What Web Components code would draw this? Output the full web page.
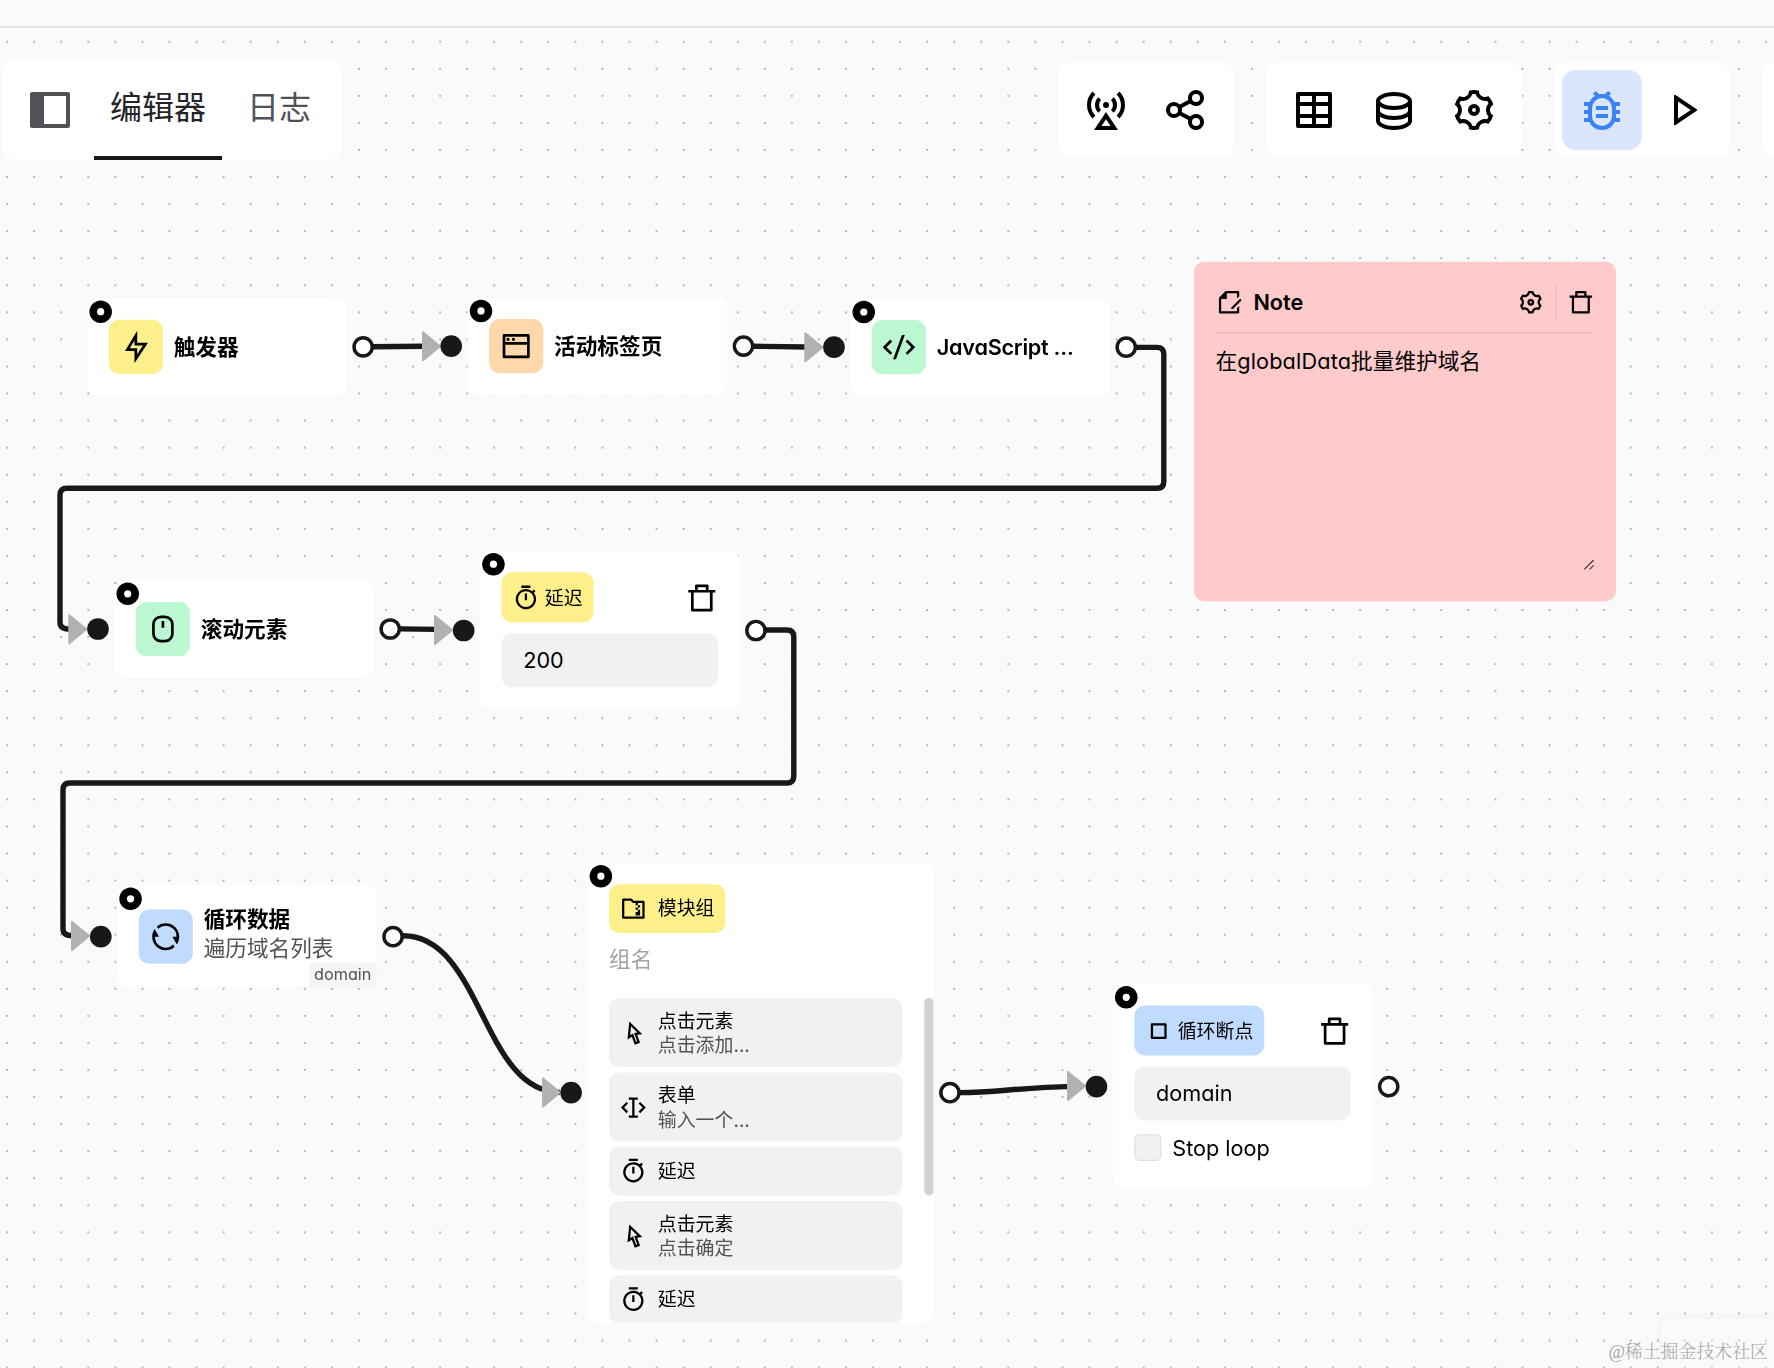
<!DOCTYPE html>
<html lang="zh-CN">
<head>
<meta charset="utf-8">
<title>Workflow editor</title>
<style>
  html, body { margin: 0; height: 100%; overflow: hidden; background: #fafafa; }
  body { font-family: Inter, "Noto Sans CJK SC", sans-serif; font-feature-settings: "cv11"; color: #000; }
</style>
</head>
<body>
<workflow-app>
  <app-toolbar slot="toolbar">
    <tool-group slot="start" class="tabs">
      <ui-icon name="sidebar" size="48"></ui-icon>
      <tab-label active>编辑器</tab-label>
      <tab-label>日志</tab-label>
    </tool-group>
    <tool-group slot="end">
      <tool-button><ui-icon name="station" size="48"></ui-icon></tool-button>
      <tool-button><ui-icon name="share" size="48"></ui-icon></tool-button>
    </tool-group>
    <tool-group slot="end">
      <tool-button><ui-icon name="table" size="48"></ui-icon></tool-button>
      <tool-button><ui-icon name="database" size="48"></ui-icon></tool-button>
      <tool-button><ui-icon name="settings" size="48"></ui-icon></tool-button>
    </tool-group>
    <tool-group slot="end">
      <tool-button active><ui-icon name="bug" size="48"></ui-icon></tool-button>
      <tool-button><ui-icon name="play" size="48"></ui-icon></tool-button>
    </tool-group>
    <tool-group slot="end" class="save"></tool-group>
  </app-toolbar>

  <flow-edges slot="edges"></flow-edges>

  <flow-node x="64.4" y="220.4" h="72" target="no"><block-basic icon="flash" tone="yellow">触发器</block-basic></flow-node>
  <flow-node x="345.5" y="219.8" h="72"><block-basic icon="window" tone="orange">活动标签页</block-basic></flow-node>
  <flow-node x="628.4" y="220.6" h="72"><block-basic icon="code" tone="green" class="latin">JavaScript ...</block-basic></flow-node>
  <flow-node x="84.4" y="428.9" h="72"><block-basic icon="mouse" tone="green">滚动元素</block-basic></flow-node>
  <flow-node x="354.7" y="407" h="117.2">
    <block-edit icon="timer" tone="yellow" label="延迟"><field-box>200</field-box></block-edit>
  </flow-node>
  <flow-node x="86.5" y="654.3" h="75">
    <block-basic icon="refresh" tone="blue">循环数据<span slot="desc">遍历域名列表</span></block-basic>
    <span slot="tag">domain</span>
  </flow-node>
  <flow-node x="434.1" y="637.6" h="340" w="256">
    <block-group label="模块组" hint="组名">
      <group-item icon="cursor">点击元素<span slot="desc">点击添加...</span></group-item>
      <group-item icon="form">表单<span slot="desc">输入一个...</span></group-item>
      <group-item icon="timer">延迟</group-item>
      <group-item icon="cursor">点击元素<span slot="desc">点击确定</span></group-item>
      <group-item icon="timer">延迟</group-item>
    </block-group>
  </flow-node>
  <flow-node x="822.4" y="727.1" h="151">
    <block-edit icon="stop" tone="blue" label="循环断点">
      <field-box>domain</field-box>
      <check-row>Stop loop</check-row>
    </block-edit>
  </flow-node>
  <note-card x="882.4" y="193.4">在<span>globalData</span>批量维护域名</note-card>

  <mini-map slot="overlay"></mini-map>
  <water-mark slot="overlay">@稀土掘金技术社区</water-mark>
</workflow-app>

<script>
const ICONS = {
  sidebar: '<path d="M3 3h18a1 1 0 0 1 1 1v16a1 1 0 0 1-1 1H3a1 1 0 0 1-1-1V4a1 1 0 0 1 1-1zm6 2v14h11V5H9z"/>',
  station: '<path d="M12 13l6 9H6l6-9zm0 3.6L9.74 20h4.52L12 16.6z"/><circle cx="12" cy="9.5" r="1.5"/><g fill="none" stroke="currentColor" stroke-width="2"><path d="M5.99 3.49a8.5 8.5 0 0 0 0 12.02M18.01 3.49a8.5 8.5 0 0 1 0 12.02M8.82 6.32a4.5 4.5 0 0 0 0 6.36M15.18 6.32a4.5 4.5 0 0 1 0 6.36"/></g>',
  share: '<path d="M13.12 17.023l-4.199-2.29a4 4 0 1 1 0-5.465l4.2-2.29a4 4 0 1 1 .959 1.755l-4.2 2.29a4.008 4.008 0 0 1 0 1.954l4.199 2.29a4 4 0 1 1-.959 1.755zM6 14a2 2 0 1 0 0-4 2 2 0 0 0 0 4zm11-6a2 2 0 1 0 0-4 2 2 0 0 0 0 4zm0 12a2 2 0 1 0 0-4 2 2 0 0 0 0 4z"/>',
  table: '<path d="M13 10v4h6v-4h-6zm-2 0H5v4h6v-4zm2 9h6v-3h-6v3zm-2 0v-3H5v3h6zm2-14v3h6V5h-6zm-2 0H5v3h6V5zM4 3h16a1 1 0 0 1 1 1v16a1 1 0 0 1-1 1H4a1 1 0 0 1-1-1V4a1 1 0 0 1 1-1z"/>',
  database: '<path d="M5 12.5c0 .313.461.858 1.53 1.393C7.914 14.585 9.877 15 12 15c2.123 0 4.086-.415 5.47-1.107 1.069-.535 1.53-1.08 1.53-1.393v-2.171C17.35 11.349 14.827 12 12 12s-5.35-.652-7-1.671V12.5zm14 2.829C17.35 16.349 14.827 17 12 17s-5.35-.652-7-1.671V17.5c0 .313.461.858 1.53 1.393C7.914 19.585 9.877 20 12 20c2.123 0 4.086-.415 5.47-1.107 1.069-.535 1.53-1.08 1.53-1.393v-2.171zM3 17.5v-10C3 5.015 7.03 3 12 3s9 2.015 9 4.5v10c0 2.485-4.03 4.5-9 4.5s-9-2.015-9-4.5zm9-7.5c2.123 0 4.086-.415 5.47-1.107C18.539 8.358 19 7.813 19 7.5c0-.313-.461-.858-1.53-1.393C16.086 5.415 14.123 5 12 5c-2.123 0-4.086.415-5.47 1.107C5.461 6.642 5 7.187 5 7.5c0 .313.461.858 1.53 1.393C7.914 9.585 9.877 10 12 10z"/>',
  settings: '<path d="M3.34 17a10.018 10.018 0 0 1-.978-2.326 3 3 0 0 0 .002-5.347A9.99 9.99 0 0 1 4.865 4.99a3 3 0 0 0 4.631-2.674 9.99 9.99 0 0 1 5.007.002 3 3 0 0 0 4.632 2.672c.579.59 1.093 1.261 1.525 2.01.433.749.757 1.53.978 2.326a3 3 0 0 0-.002 5.347 9.99 9.99 0 0 1-2.501 4.337 3 3 0 0 0-4.631 2.674 9.99 9.99 0 0 1-5.007-.002 3 3 0 0 0-4.632-2.672A10.018 10.018 0 0 1 3.34 17zm5.66.196a4.993 4.993 0 0 1 2.25 2.77c.499.047 1 .048 1.499.001A4.993 4.993 0 0 1 15 17.197a4.993 4.993 0 0 1 3.525-.565c.29-.408.54-.843.748-1.298A4.993 4.993 0 0 1 18 12c0-1.26.47-2.437 1.273-3.334a8.126 8.126 0 0 0-.75-1.298A4.993 4.993 0 0 1 15 6.804a4.993 4.993 0 0 1-2.25-2.77c-.499-.047-1-.048-1.499-.001A4.993 4.993 0 0 1 9 6.803a4.993 4.993 0 0 1-3.525.565 7.99 7.99 0 0 0-.748 1.298A4.993 4.993 0 0 1 6 12c0 1.26-.47 2.437-1.273 3.334a8.126 8.126 0 0 0 .75 1.298A4.993 4.993 0 0 1 9 17.196zM12 15a3 3 0 1 1 0-6 3 3 0 0 1 0 6zm0-2a1 1 0 1 0 0-2 1 1 0 0 0 0 2z"/>',
  bug: '<path d="M10.562 4.148a7.03 7.03 0 0 1 2.876 0l1.683-1.684 1.415 1.415-1.05 1.05A7.03 7.03 0 0 1 18.326 8H21v2h-2.07c.046.327.07.66.07 1v1h2v2h-2v1c0 .34-.024.673-.07 1H21v2h-2.674a7 7 0 0 1-12.652 0H3v-2h2.07A7.06 7.06 0 0 1 5 15v-1H3v-2h2v-1c0-.34.024-.673.07-1H3V8h2.674a7.03 7.03 0 0 1 2.84-3.072l-1.05-1.05L8.88 2.465l1.683 1.683zM12 6a5 5 0 0 0-5 5v4a5 5 0 0 0 10 0v-4a5 5 0 0 0-5-5zm-3 8h6v2H9v-2zm0-4h6v2H9v-2z"/>',
  play: '<path d="M16.394 12L10 7.737v8.526L16.394 12zm2.982.416L8.777 19.482A.5.5 0 0 1 8 19.066V4.934a.5.5 0 0 1 .777-.416l10.599 7.066a.5.5 0 0 1 0 .832z"/>',
  flash: '<path d="M13 9h8L11 24v-9H4l9-15v9zm-2 2V7.22L7.532 13H13v4.394L17.263 11H11z"/>',
  window: '<path d="M21 3a1 1 0 0 1 1 1v16a1 1 0 0 1-1 1H3a1 1 0 0 1-1-1V4a1 1 0 0 1 1-1h18zm-1 8H4v8h16v-8zm0-2V5H4v4h16zM5 6h2v2H5V6zm4 0h2v2H9V6z"/>',
  code: '<path d="M24 12l-5.657 5.657-1.414-1.414L21.172 12l-4.243-4.243 1.414-1.414L24 12zM2.828 12l4.243 4.243-1.414 1.414L0 12l5.657-5.657L7.07 7.757 2.828 12zm6.96 9H7.66l6.552-18h2.128L9.788 21z"/>',
  mouse: '<rect x="5" y="3" width="14" height="18" rx="5.5" fill="none" stroke="currentColor" stroke-width="2"/><path d="M11 6h2v5h-2z"/>',
  refresh: '<path d="M5.463 4.433A9.961 9.961 0 0 1 12 2c5.523 0 10 4.477 10 10 0 2.136-.67 4.116-1.81 5.74L17 12h3A8 8 0 0 0 6.46 6.228l-.997-1.795zm13.074 15.134A9.961 9.961 0 0 1 12 22C6.477 22 2 17.523 2 12c0-2.136.67-4.116 1.81-5.74L7 12H4a8 8 0 0 0 13.54 5.772l.997 1.795z"/>',
  timer: '<path d="M17.618 5.968l1.453-1.453 1.414 1.414-1.453 1.453a9 9 0 1 1-1.414-1.414zM12 20a7 7 0 1 0 0-14 7 7 0 0 0 0 14zM11 8h2v6h-2V8zM8 1h8v2H8V1z"/>',
  trash: '<path d="M17 6h5v2h-2v13a1 1 0 0 1-1 1H5a1 1 0 0 1-1-1V8H2V6h5V3a1 1 0 0 1 1-1h8a1 1 0 0 1 1 1v3zm1 2H6v12h12V8zM9 4v2h6V4H9z"/>',
  zip: '<path d="M10.414 3l2 2H21a1 1 0 0 1 1 1v14a1 1 0 0 1-1 1H3a1 1 0 0 1-1-1V4a1 1 0 0 1 1-1h7.414zM18 18h-4v-3h2v-2h-2v-2h2V9h-2V7h-2.414l-2-2H4v14h16V7h-4v2h2v2h-2v2h2v5z"/>',
  cursor: '<path d="M15.388 13.498l2.552 7.014-4.698 1.71-2.553-7.014-3.899 2.445L8.41 1.633l11.537 11.232-4.558.633zm-.011 5.818l-2.715-7.46 2.96-.41-5.64-5.49-.79 7.83 2.53-1.587 2.715 7.46.94-.343z"/>',
  form: '<path d="M8 21v-2h3V5H8V3h8v2h-3v14h3v2H8zM18.05 7.05L23 12l-4.95 4.95-1.414-1.414L20.172 12l-3.536-3.536L18.05 7.05zm-12.1 0l1.414 1.414L3.828 12l3.536 3.536L5.95 16.95 1 12l4.95-4.95z"/>',
  stop: '<path d="M7 7v10h10V7H7zM6 5h12a1 1 0 0 1 1 1v12a1 1 0 0 1-1 1H6a1 1 0 0 1-1-1V6a1 1 0 0 1 1-1z"/>',
  note: '<path d="M21 6.757l-2 2V4h-9v5H5v11h14v-2.757l2-2v5.765a.993.993 0 0 1-.993.992H3.993A1 1 0 0 1 3 20.993V8l6.003-6h10.995C20.55 2 21 2.455 21 2.992v3.765zm.778 2.05l1.414 1.415L15.414 18l-1.416-.002.002-1.412 7.778-7.778z"/>',
  record: '<path d="M12 22C6.477 22 2 17.523 2 12S6.477 2 12 2s10 4.477 10 10-4.477 10-10 10z"/><circle cx="12" cy="12" r="3.2" fill="#fff"/>'
};
const TONES = { yellow: '#fdf08a', orange: '#fed7aa', green: '#bbf7d0', blue: '#bfdbfe' };

/* Registers an element whose shadow root is produced by render(host). */
function define(name, render) {
  customElements.define(name, class extends HTMLElement {
    connectedCallback() {
      if (this.shadowRoot) return;
      this.attachShadow({ mode: 'open' }).innerHTML = render(this);
    }
  });
}
const attr = (el, n, d = '') => el.getAttribute(n) ?? d;

define('ui-icon', el => `
  <style>:host{display:block;flex:none;width:${attr(el,'size',24)}px;height:${attr(el,'size',24)}px}svg{display:block;width:100%;height:100%}</style>
  <svg viewBox="0 0 24 24" fill="currentColor" fill-rule="evenodd">${ICONS[attr(el,'name')]}</svg>`);

define('workflow-app', () => `
  <style>
    :host{display:flex;flex-direction:column;height:100vh;overflow:hidden}
    .top{flex:none;height:26px;border-bottom:2px solid #e5e5e6}
    .canvas{position:relative;flex:1;overflow:hidden}
    .dots{position:absolute;inset:0;width:100%;height:100%}
    .layer{position:absolute;left:0;top:-28px;transform:scale(1.353);transform-origin:0 0}
  </style>
  <div class="top"></div>
  <main class="canvas">
    <svg class="dots"><defs><pattern id="p" x="-6.4" y="0.2" width="27.06" height="27.06" patternUnits="userSpaceOnUse"><circle cx="13.53" cy="13.53" r=".9" fill="#96969b"/></pattern></defs><rect width="100%" height="100%" fill="url(#p)"/></svg>
    <slot name="edges"></slot>
    <div class="layer"><slot></slot></div>
    <slot name="toolbar"></slot>
    <slot name="overlay"></slot>
  </main>`);

define('app-toolbar', () => `
  <style>
    :host{position:absolute;top:32px;left:2px;width:1936px;display:flex;justify-content:space-between;align-items:center}
    .end{display:flex;gap:32px}
  </style>
  <slot name="start"></slot><div class="end"><slot name="end"></slot></div>`);

define('tool-group', () => `
  <style>
    :host{display:flex;align-items:center;box-sizing:border-box;height:96px;padding:0 8px;background:#fff;border-radius:14px;box-shadow:0 0 4px rgba(0,0,0,.012)}
    :host(.tabs){height:100px;padding:0 0 0 24px;width:340px}
    :host(.tabs) ::slotted(ui-icon){color:#515158;margin-right:20px}
    :host(.save){width:176px}
  </style><slot></slot>`);

define('tab-label', () => `
  <style>
    :host{display:flex;box-sizing:border-box;height:100px;padding:0 0 6px 25px;align-items:center;font-size:32px;color:#515158;border-bottom:4px solid transparent}
    :host([active]){color:#242426;padding:0 16px 6px;border-bottom-color:#18181b}
  </style><slot></slot>`);

define('tool-button', () => `
  <style>
    :host{display:flex;align-items:center;justify-content:center;width:80px;height:80px;border-radius:14px}
    :host([active]){background:#dbe6fe;color:#3b82f6}
  </style><slot></slot>`);

/* Connections between blocks, in canvas pixels. */
define('flow-edges', () => {
  const arrow = (x, y) => `<path d="M${x + 1} ${y - 14}V${y + 14}L${x + 18} ${y}z" fill="#b1b1b4" stroke="#b1b1b4" stroke-width="2" stroke-linejoin="round"/>`;
  return `
  <style>:host{position:absolute;left:0;top:-28px}svg{display:block}</style>
  <svg width="1774" height="1368">
    <g fill="none" stroke="#18181b" stroke-width="5.4">
      <path d="M372 346.8L424 346.2"/>
      <path d="M753 346.2L806 347"/>
      <path d="M1135 347.4H1157Q1163.8 347.4 1163.8 354.2V481.4Q1163.8 488.2 1157 488.2H66.8Q60 488.2 60 495V622.5Q60 629.2 70 629.2"/>
      <path d="M400 628.9L436 629.4"/>
      <path d="M765 630H787Q793.8 630 793.8 636.8V776.2Q793.8 783 787 783H69.8Q63 783 63 789.8V929Q63 935.8 73 935.8"/>
      <path d="M403 935.8C482 935.8 482 1092.4 560 1092.4"/>
      <path d="M960 1092.6C995 1092.6 1020 1087.6 1072 1086.4"/>
    </g>
    ${arrow(422,346.2)}${arrow(804.3,347.2)}${arrow(68.3,629.2)}${arrow(434,630)}${arrow(71,936)}${arrow(542,1092.4)}${arrow(1067,1086)}
  </svg>`;
});

/* Nodes are placed by translation so that fractional canvas units survive the zoom. */
define('flow-node', el => `
  <style>
    :host{position:absolute;left:0;top:0;transform:translate(${attr(el,'x')}px,${attr(el,'y')}px);width:${attr(el,'w',192)}px;height:${attr(el,'h')}px;
      display:flex;flex-direction:column;background:#fff;border-radius:8px;box-shadow:0 0 3px rgba(0,0,0,.015)}
    ::slotted(:not(span)){flex:1;min-height:0}
    .badge{position:absolute;left:0;top:0}
    .port{position:absolute;box-sizing:border-box;width:16px;height:16px;top:calc(50% - 8px);border-radius:50%;background:#18181b}
    .in{left:-20px}
    .out{right:-20px;background:radial-gradient(circle closest-side,#fff 5.1px,#18181b 5.7px)}
    ::slotted(span){position:absolute;right:0;bottom:-.6px;padding:0 4px;font-size:12px;line-height:18.4px;color:#515158;background:#f6f6f7;border-radius:4px 0 8px 0}
  </style>
  <slot></slot><slot name="tag"></slot>
  <ui-icon class="badge" name="record" size="20"></ui-icon>
  ${attr(el,'target') === 'no' ? '' : '<i class="port in"></i>'}<i class="port out"></i>`);

define('block-basic', el => `
  <style>
    :host{display:flex;align-items:center;gap:8px;padding:0 16px;font-size:16px;font-weight:600;line-height:21px;white-space:nowrap}
    :host(.latin) .txt{letter-spacing:-.19px;padding-top:1px}
    .box{display:flex;padding:8px;border-radius:8px;background:${TONES[attr(el,'tone')]}}
    .txt{display:flex;flex-direction:column}
    .two{margin-top:-3.5px}
    ::slotted(span){font-weight:400;color:#515158}
  </style>
  <div class="box"><ui-icon name="${attr(el,'icon')}" size="24"></ui-icon></div>
  <div class="txt${el.querySelector('span') ? ' two' : ''}"><div><slot></slot></div><slot name="desc"></slot></div>`);

const CHIP = `.chip{display:flex;align-items:center;gap:4px;height:37.2px;padding:0 8px;border-radius:8px;font-size:14px;line-height:20px;white-space:nowrap}`;

define('block-edit', el => `
  <style>
    :host{display:flex;flex-direction:column;gap:8px;padding:16px}
    .head{display:flex;align-items:center;justify-content:space-between}
    ${CHIP}.chip{background:${TONES[attr(el,'tone')]}}
  </style>
  <div class="head"><div class="chip"><ui-icon name="${attr(el,'icon')}" size="20"></ui-icon>${attr(el,'label')}</div><ui-icon name="trash" size="24"></ui-icon></div>
  <slot></slot>`);

define('field-box', () => `
  <style>:host{display:flex;flex:none;align-items:center;height:40px;padding:0 16px;border-radius:8px;background:#f1f1f1;font-size:16px}</style><slot></slot>`);

define('check-row', () => `
  <style>:host{display:flex;align-items:center;gap:8px;height:24px;font-size:16px}
    i{box-sizing:border-box;width:20px;height:20px;border:1px solid #e1e1e2;border-radius:4px;background:#f1f1f1}</style><i></i><slot></slot>`);

define('block-group', el => `
  <style>
    :host{display:flex;flex-direction:column;border-radius:8px;overflow:hidden}
    .head{flex:none;display:flex;flex-direction:column;align-items:flex-start;gap:7px;height:84px;padding:16px 16px 0}
    ${CHIP}.chip{height:36px;gap:8px;background:${TONES.yellow}}
    .hint{font-size:16px;line-height:24px;color:#a1a1a5}
    .list{flex:1;min-height:0;display:flex;padding-left:16px;overflow:hidden}
    .items{flex:none;display:flex;flex-direction:column;gap:4px;width:217px}
    .bar{width:6.6px;height:146px;margin-left:auto;border-radius:4px;background:#d2d2d4}
  </style>
  <div class="head"><div class="chip"><ui-icon name="zip" size="20"></ui-icon>${attr(el,'label')}</div><div class="hint">${attr(el,'hint')}</div></div>
  <div class="list"><div class="items"><slot></slot></div><div class="bar"></div></div>`);

define('group-item', el => `
  <style>
    :host{display:flex;flex:none;align-items:center;gap:8px;box-sizing:border-box;min-height:36px;padding:8px;border-radius:8px;background:#f1f1f1;font-size:14px;line-height:17.5px;white-space:nowrap}
    .txt{display:flex;flex-direction:column}
    ::slotted(span){color:#515158}
  </style>
  <ui-icon name="${attr(el,'icon')}" size="20"></ui-icon><div class="txt"><div><slot></slot></div><slot name="desc"></slot></div>`);

define('note-card', el => `
  <style>
    :host{position:absolute;left:0;top:0;transform:translate(${attr(el,'x')}px,${attr(el,'y')}px);box-sizing:border-box;width:312px;height:251.4px;padding:16px;border-radius:8px;background:#fecaca;display:flex;flex-direction:column}
    header{display:flex;align-items:center;gap:8px;height:27.5px;padding-bottom:8px;border-bottom:1px solid #ebbaba;font-weight:600;font-size:16px}
    b{flex:1;font-weight:600}
    hr{width:1px;height:27px;margin:0;border:0;background:#f0bcbc}
    p{margin:8.5px 0 0;flex:1;font-size:16px;line-height:24px;white-space:nowrap}
    ::slotted(span){letter-spacing:.12px}
    .grip{align-self:flex-end;width:8px;height:8px;margin-bottom:7px}
  </style>
  <header><ui-icon name="note" size="20"></ui-icon><b>Note</b><ui-icon name="settings" size="20"></ui-icon><hr><ui-icon name="trash" size="20"></ui-icon></header>
  <p><slot></slot></p>
  <svg class="grip" viewBox="0 0 8 8" stroke="#3c3030" stroke-width=".8"><path d="M.5 7.5l7-7M4.5 7.5l3-3"/></svg>`);

define('mini-map', () => `
  <style>:host{position:absolute;right:0;bottom:0;width:112px;height:49px;border-radius:6px 0 0 0;background:rgba(250,250,250,.35);box-shadow:0 0 12px rgba(0,0,0,.06)}</style>`);

define('water-mark', () => `
  <style>:host{position:absolute;right:6px;bottom:3px;font:300 17.9px/26px "Liberation Serif","Noto Serif CJK SC","Noto Sans CJK SC",serif;color:#a3a3a5;white-space:nowrap}</style><slot></slot>`);
</script>
</body>
</html>
